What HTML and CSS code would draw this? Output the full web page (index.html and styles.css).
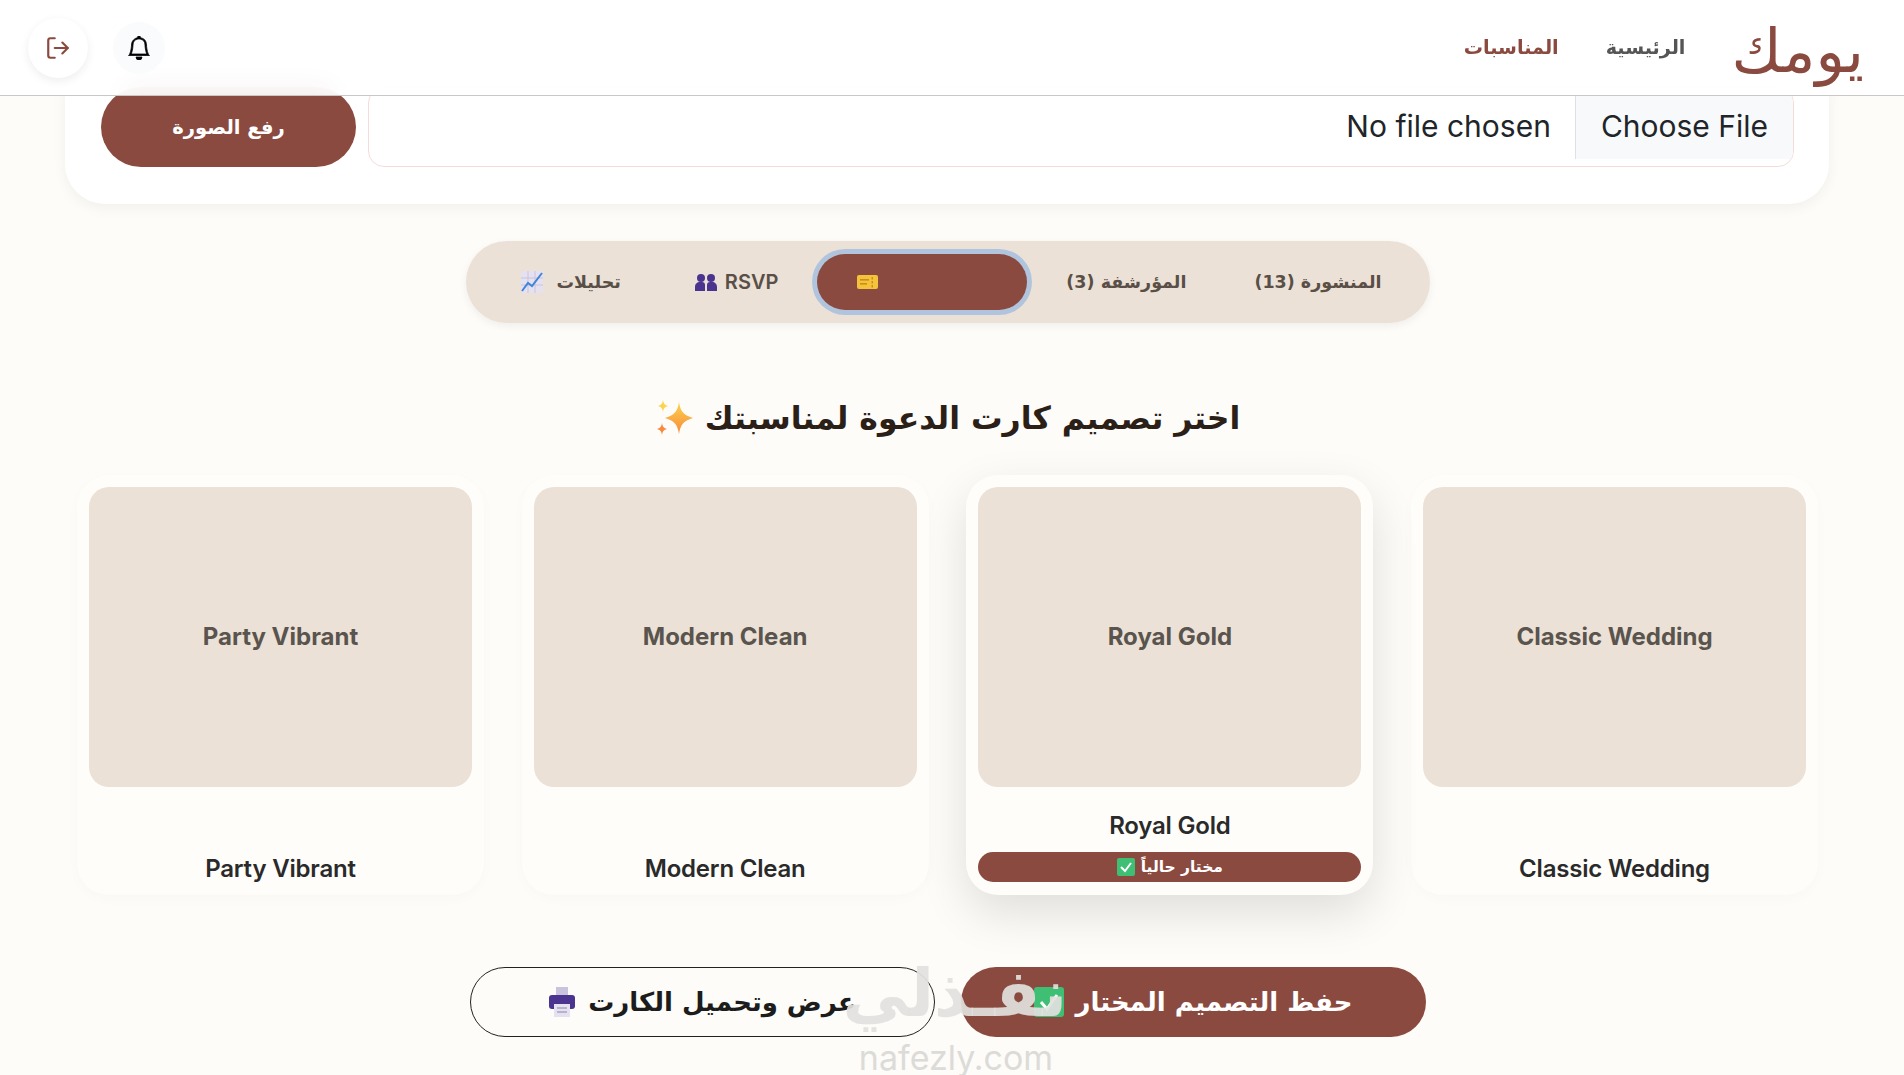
FILE: index.html
```html
<!DOCTYPE html>
<html lang="ar" dir="rtl">

<head>
    <meta charset="UTF-8">
    <meta name="viewport" content="width=device-width, initial-scale=1.0">
    <title>يومك</title>
    <link rel="stylesheet" href="styles.css">
</head>

<body>
    <header class="site-header">
        <a class="logo" href="#">يومك</a>
        <nav class="main-nav">
            <a href="#">الرئيسية</a>
            <a class="current" href="#">المناسبات</a>
        </nav>
        <div class="header-actions">
            <button class="icon-btn bell-btn" aria-label="الإشعارات">
                <svg width="24" height="24" viewBox="0 0 16 16" fill="#000" stroke="#000" stroke-width="0.5">
                    <path d="M8 16a2 2 0 0 0 2-2H6a2 2 0 0 0 2 2zM8 1.918l-.797.161A4.002 4.002 0 0 0 4 6c0 .628-.134 2.197-.459 3.742-.16.767-.376 1.566-.663 2.258h10.244c-.287-.692-.502-1.49-.663-2.258C12.134 8.197 12 6.628 12 6a4.002 4.002 0 0 0-3.203-3.92L8 1.917zM14.22 12c.223.447.481.801.78 1H1c.299-.199.557-.553.78-1C2.68 10.2 3 6.88 3 6c0-2.42 1.72-4.44 4.005-4.901a1 1 0 1 1 1.99 0A5.002 5.002 0 0 1 13 6c0 .88.32 4.2 1.22 6z" />
                </svg>
            </button>
            <button class="icon-btn logout-btn" aria-label="خروج">
                <svg width="26" height="26" viewBox="0 0 24 24" fill="none" stroke="#8b4a3f" stroke-width="2" stroke-linecap="round" stroke-linejoin="round">
                    <path d="M9 21H5a2 2 0 0 1-2-2V5a2 2 0 0 1 2-2h4" />
                    <polyline points="16 17 21 12 16 7" />
                    <line x1="21" y1="12" x2="9" y2="12" />
                </svg>
            </button>
        </div>
    </header>

    <main class="page">
        <section class="upload-card">
            <input class="file-input" type="file">
            <button class="upload-btn">رفع الصورة</button>
        </section>

        <div class="tabs">
            <a class="tab" href="#">المنشورة (13)</a>
            <a class="tab" href="#">المؤرشفة (3)</a>
            <a class="tab active" href="#" aria-label="الكروت">
                <svg width="21" height="14" viewBox="0 0 21 14">
                    <rect y="0" width="21" height="14" rx="2" fill="#f5c33b" />
                    <rect x="3" y="4" width="9" height="1.6" fill="#c98f1d" />
                    <rect x="3" y="8" width="7" height="1.6" fill="#c98f1d" />
                    <rect x="14.5" y="2" width="1.5" height="2.5" fill="#c98f1d" />
                    <rect x="14.5" y="6" width="1.5" height="2.5" fill="#c98f1d" />
                    <rect x="14.5" y="10" width="1.5" height="2.5" fill="#c98f1d" />
                </svg>
            </a>
            <a class="tab" href="#">
                <span dir="ltr" class="tab-latin">
                    <svg width="22" height="18" viewBox="0 0 22 18" fill="#4a3490">
                        <circle cx="6" cy="5" r="4" />
                        <circle cx="16" cy="5" r="4" />
                        <path d="M0 18v-4c0-3 2-5 5-5h2c2 0 3 1 3 3v6zM12 18v-6c0-2 1-3 3-3h2c3 0 5 2 5 5v4z" />
                    </svg>
                    RSVP
                </span>
            </a>
            <a class="tab tab-last" href="#">
                تحليلات
                <svg width="22" height="22" viewBox="0 0 22 22">
                    <rect width="22" height="22" rx="2" fill="#e6e1f0" />
                    <path d="M0 7h22M0 14h22M7 0v22M14 0v22" stroke="#c9c3dd" stroke-width="1" />
                    <polyline points="1,20 7,12 11,15 21,2" fill="none" stroke="#3f86d8" stroke-width="2" />
                </svg>
            </a>
        </div>

        <h2 class="section-title">
            اختر تصميم كارت الدعوة لمناسبتك
            <svg width="40" height="40" viewBox="0 0 40 40">
                <defs>
                    <linearGradient id="spark" x1="0" y1="0" x2="0" y2="1">
                        <stop offset="0" stop-color="#fcd34d" />
                        <stop offset="1" stop-color="#f78a3c" />
                    </linearGradient>
                </defs>
                <path d="M24 4c1.5 9 4 13 14 16-10 3-12.500 7-14 16-1.500-9-4-13-14-16 10-3 12.500-7 14-16z" fill="url(#spark)" />
                <path d="M8 2c.6 3.500 1.500 5 5 6-3.500 1-4.400 2.500-5 6-.6-3.500-1.500-5-5-6 3.500-1 4.400-2.500 5-6z" fill="#fcd34d" />
                <path d="M7 25c.6 3.500 1.500 5 5 6-3.500 1-4.400 2.500-5 6-.6-3.500-1.500-5-5-6 3.500-1 4.400-2.500 5-6z" fill="#f78a3c" />
            </svg>
        </h2>

        <div class="designs">
            <div class="design-card">
                <div class="design-thumb">Classic Wedding</div>
                <div class="design-name">Classic Wedding</div>
            </div>
            <div class="design-card selected">
                <div class="design-thumb">Royal Gold</div>
                <div class="design-name">Royal Gold</div>
                <div class="selected-badge">
                    مختار حالياً
                    <svg width="18" height="18" viewBox="0 0 18 18">
                        <rect width="18" height="18" rx="2" fill="#3fbf74" />
                        <polyline points="4,9 8,13 14,5" fill="none" stroke="#fff" stroke-width="2" />
                    </svg>
                </div>
            </div>
            <div class="design-card">
                <div class="design-thumb">Modern Clean</div>
                <div class="design-name">Modern Clean</div>
            </div>
            <div class="design-card">
                <div class="design-thumb">Party Vibrant</div>
                <div class="design-name">Party Vibrant</div>
            </div>
        </div>

        <div class="actions">
            <button class="action-btn save-btn">
                حفظ التصميم المختار
                <svg width="30" height="30" viewBox="0 0 30 30">
                    <rect width="30" height="30" rx="3" fill="#3fbf74" />
                    <polyline points="7,15 13,22 23,8" fill="none" stroke="#fff" stroke-width="3" />
                </svg>
            </button>
            <button class="action-btn print-btn">
                عرض وتحميل الكارت
                <svg width="28" height="30" viewBox="0 0 28 30">
                    <rect x="8" y="0" width="12" height="10" fill="#c9c3dd" />
                    <rect x="1" y="8" width="26" height="14" rx="3" fill="#4a3490" />
                    <rect x="6" y="17" width="16" height="13" fill="#e6e1f0" />
                    <path d="M9 21h10M9 25h10" stroke="#a9a3c0" stroke-width="1.500" />
                </svg>
            </button>
        </div>
    </main>

    <div class="watermark" aria-hidden="true">
        <div class="watermark-ar">نفـذلي</div>
        <div class="watermark-en">nafezly.com</div>
    </div>
</body>

</html>
```

FILE: styles.css
```css
* {
    box-sizing: border-box;
}

body {
    font-family: "DejaVu Sans", sans-serif;
    margin: 0;
    padding: 0;
    background-color: #fdfcf8;
    color: #2b2320;
}

a {
    text-decoration: none;
}

button {
    font-family: inherit;
    border: none;
    cursor: pointer;
}

/* header sits over the scrolled page */
.site-header {
    position: fixed;
    top: 0;
    left: 0;
    right: 0;
    z-index: 10;
    height: 96px;
    display: flex;
    align-items: center;
    padding: 0 40px 0 28px;
    background: rgba(255, 255, 255, 0.9);
    backdrop-filter: blur(12px);
    border-bottom: 1px solid #cbc7c6;
}

.logo {
    padding-top: 6px;
    font-size: 61px;
    color: #8b4a3f;
    line-height: 1;
}

.main-nav {
    display: flex;
    gap: 47px;
    margin-right: 46px;
    font-size: 19.2px;
    font-weight: bold;
}

.main-nav a {
    color: #555;
}

.main-nav a.current {
    color: #8b4a3f;
}

.header-actions {
    display: flex;
    align-items: center;
    gap: 25px;
    margin-right: auto;
}

.icon-btn {
    display: flex;
    align-items: center;
    justify-content: center;
    padding: 0;
    border-radius: 50%;
}

.logout-btn {
    width: 60px;
    height: 60px;
    background: #fff;
    box-shadow: 0 3px 10px rgba(0, 0, 0, 0.07);
}

.bell-btn {
    width: 52px;
    height: 52px;
    background: #fafbfc;
}

.page {
    width: 1895px;
    margin-right: auto;
    padding-top: 50px;
}

.upload-card {
    display: flex;
    gap: 12px;
    margin: 0 66px 0 65px;
    padding: 37px 35px 37px 36px;
    background: #fff;
    border-radius: 40px;
    box-shadow: 0 4px 14px rgba(0, 0, 0, 0.05);
}

.file-input {
    flex: 1;
    height: 80px;
    padding: 5px 0 8px 0;
    font-family: "Inter", sans-serif;
    font-size: 30px;
    color: #212529;
    background: #fff;
    border: 1px solid #f5dcdc;
    border-radius: 16px;
}

.file-input::file-selector-button {
    height: 66px;
    padding: 0 25px;
    margin: 0 0 0 24px;
    font: inherit;
    color: #212529;
    background: #f8f9fa;
    border: none;
    border-left: 1px solid #dee2e6;
}

.upload-btn {
    width: 255px;
    height: 80px;
    color: #fff;
    font-size: 19.5px;
    font-weight: bold;
    background: #8b4a3f;
    border-radius: 40px;
}

.tabs {
    display: flex;
    align-items: center;
    width: 964px;
    height: 82px;
    margin: 37px auto 0;
    padding: 0 14px;
    background: #ebe1d6;
    border-radius: 41px;
    box-shadow: 0 3px 8px rgba(0, 0, 0, 0.06);
}

.tab {
    display: flex;
    align-items: center;
    gap: 10px;
    flex: 0 0 auto;
    height: 56px;
    padding: 0 34px;
    font-size: 17.5px;
    font-weight: bold;
    color: #5a4f47;
    white-space: nowrap;
}

.tab-last {
    gap: 14px;
    padding-right: 40px;
}

.tab-latin {
    display: flex;
    align-items: center;
    gap: 8px;
    font-family: "Inter", sans-serif;
    font-size: 20px;
    font-weight: 600;
}

.tab.active {
    width: 210px;
    padding: 0 40px;
    justify-content: flex-end;
    background: #8b4a3f;
    border-radius: 28px;
    box-shadow: 0 0 0 5px #b0c4de;
    margin: 0 5px;
}

.section-title {
    display: flex;
    justify-content: center;
    align-items: center;
    gap: 10px;
    height: 60px;
    margin: 65px 0 27px;
    font-size: 31.5px;
    font-weight: bold;
    color: #2b2018;
}

.designs {
    display: grid;
    grid-template-columns: repeat(4, 407px);
    gap: 37.7px;
    justify-content: center;
}

.design-card {
    display: flex;
    flex-direction: column;
    height: 420px;
    padding: 12px 12px 0;
    background: #fefdfa;
    border-radius: 32px;
    box-shadow: 0 4px 14px rgba(0, 0, 0, 0.02);
}

.design-card.selected {
    box-shadow: 0 18px 48px rgba(0, 0, 0, 0.12);
}

.design-thumb {
    display: flex;
    align-items: center;
    justify-content: center;
    height: 300px;
    padding-bottom: 2px;
    font-family: "Inter", sans-serif;
    font-size: 24px;
    font-weight: 700;
    color: #5a544e;
    background: #ebe1d6;
    border-radius: 20px;
}

.design-name {
    margin-top: auto;
    margin-bottom: 14px;
    font-family: "Inter", sans-serif;
    font-size: 24px;
    line-height: 24px;
    font-weight: 600;
    letter-spacing: -0.2px;
    text-align: center;
    color: #2a2a2a;
}

.selected-badge {
    display: flex;
    align-items: center;
    justify-content: center;
    gap: 6px;
    height: 30px;
    margin-bottom: 13px;
    font-size: 15.5px;
    font-weight: bold;
    color: #fff;
    background: #8b4a3f;
    border-radius: 15px;
}

.actions {
    display: flex;
    justify-content: center;
    gap: 26px;
    margin-top: 72px;
}

.action-btn {
    display: flex;
    align-items: center;
    justify-content: center;
    gap: 12px;
    width: 465px;
    height: 70px;
    font-size: 26px;
    font-weight: bold;
    border-radius: 35px;
}

.save-btn {
    color: #fff;
    background: #8b4a3f;
}

.print-btn {
    color: #1c1c1c;
    background: transparent;
    border: 1px solid #222;
}

.watermark {
    position: absolute;
    left: 851px;
    top: 948px;
    width: 216px;
    text-align: center;
    pointer-events: none;
}

.watermark-ar {
    font-size: 66px;
    line-height: 92px;
    font-weight: bold;
    color: rgba(226, 225, 222, 0.92);
    white-space: nowrap;
}

.watermark-en {
    margin-right: 6px;
    font-family: "Inter", sans-serif;
    font-size: 34px;
    line-height: 36px;
    color: #dcdbd8;
}
```
